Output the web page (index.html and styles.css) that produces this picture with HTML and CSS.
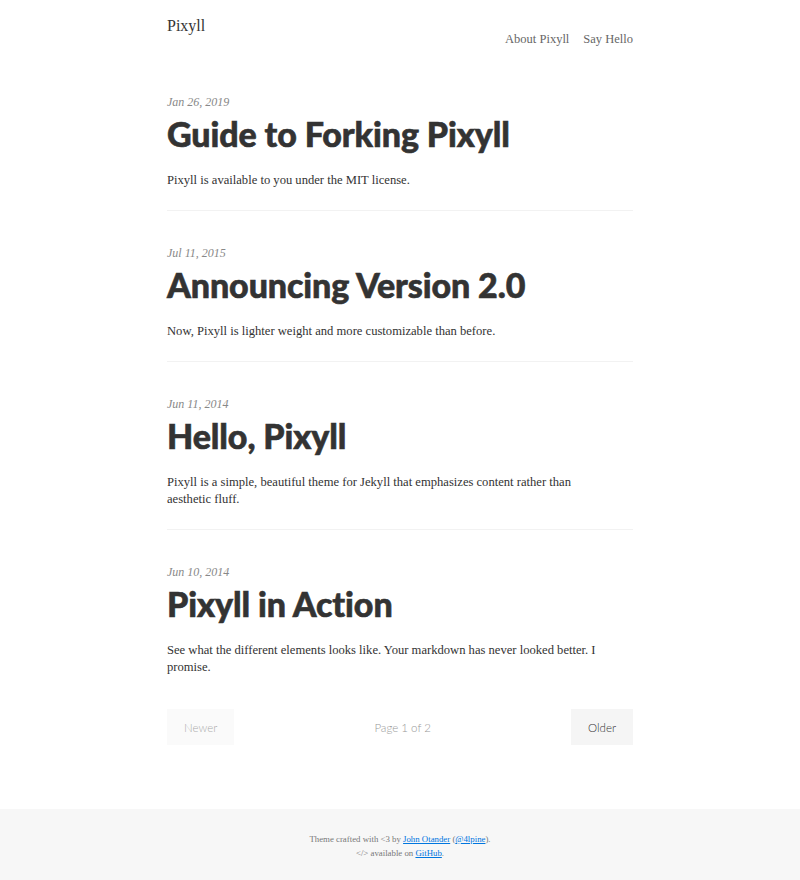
FILE: index.html
```html
<!DOCTYPE html>
<html>
<head>
<meta charset="utf-8">
<link rel="stylesheet" href="styles.css">
</head>
<body>
<header class="site-header">
  <div class="container header-row">
    <a class="site-title" href="#">Pixyll</a>
    <nav class="site-nav">
      <a href="#">About Pixyll</a>
      <a href="#">Say Hello</a>
    </nav>
  </div>
</header>
<main class="container posts">
  <article class="post">
    <div class="post-date">Jan 26, 2019</div>
    <h1 class="post-title">Guide to Forking Pixyll</h1>
    <p class="post-excerpt">Pixyll is available to you under the MIT license.</p>
  </article>
  <article class="post">
    <div class="post-date">Jul 11, 2015</div>
    <h1 class="post-title">Announcing Version 2.0</h1>
    <p class="post-excerpt">Now, Pixyll is lighter weight and more customizable than before.</p>
  </article>
  <article class="post">
    <div class="post-date">Jun 11, 2014</div>
    <h1 class="post-title">Hello, Pixyll</h1>
    <p class="post-excerpt">Pixyll is a simple, beautiful theme for Jekyll that emphasizes content rather than aesthetic fluff.</p>
  </article>
  <article class="post last">
    <div class="post-date">Jun 10, 2014</div>
    <h1 class="post-title">Pixyll in Action</h1>
    <p class="post-excerpt">See what the different elements looks like. Your markdown has never looked better. I promise.</p>
  </article>
  <div class="pagination">
    <span class="page-btn disabled">Newer</span>
    <span class="page-info">Page 1 of 2</span>
    <a class="page-btn" href="#">Older</a>
  </div>
</main>
<footer class="site-footer">
  <p>Theme crafted with &lt;3 by <a href="#">John Otander</a> (<a href="#">@4lpine</a>).</p>
  <p>&lt;/&gt; available on <a href="#">GitHub</a>.</p>
</footer>
</body>
</html>
```
FILE: styles.css
```css
html, body {
  margin: 0;
  padding: 0;
  background: #fff;
}
body {
  font-family: "Liberation Serif", "DejaVu Serif", serif;
  color: #333;
  font-size: 12.6px;
  line-height: 17px;
}
a {
  color: inherit;
  text-decoration: none;
}
.container {
  width: 466px;
  margin: 0 auto;
}
.site-header {
  padding-top: 16px;
  height: 94px;
  box-sizing: border-box;
}
.header-row {
  display: flex;
  justify-content: space-between;
  align-items: flex-start;
}
.site-title {
  font-size: 16px;
  line-height: 20px;
  color: #333;
}
.site-nav {
  display: flex;
  gap: 14px;
  margin-top: 13px;
  font-size: 12.5px;
  line-height: 20px;
}
.site-nav a {
  color: #666;
}
.post {
  border-bottom: 1px solid #f2f2f2;
  padding-bottom: 21px;
  margin-bottom: 34px;
}
.post.last {
  border-bottom: none;
  padding-bottom: 0;
  margin-bottom: 0;
}
.post-date {
  font-style: italic;
  color: #888;
  font-size: 12px;
  line-height: 17px;
}
.post-title {
  font-family: "Lato", "Liberation Sans", sans-serif;
  font-weight: 900;
  font-size: 34px;
  line-height: 40px;
  margin: 3px 0 0;
  color: #333;
  letter-spacing: -0.1px;
  -webkit-text-stroke: 0.6px #333;
}
.post-excerpt {
  margin: 18px 0 0;
  max-width: 445px;
}
.pagination {
  margin-top: 33px;
  display: flex;
  justify-content: space-between;
  align-items: center;
  font-family: "Lato", "Liberation Sans", sans-serif;
  font-size: 11.5px;
  font-weight: 300;
}
.page-btn {
  display: flex;
  align-items: center;
  height: 36px;
  padding: 0 17px;
  background: #f5f5f5;
  color: #333;
}
.page-btn.disabled {
  background: #fafafa;
  color: #aaa;
}
.page-info {
  color: #999;
}
.site-footer {
  margin-top: 64px;
  background: #f7f7f7;
  padding: 23px 0 20px;
  text-align: center;
  font-size: 8.8px;
  line-height: 14px;
  color: #777;
}
.site-footer p {
  margin: 0;
}
.site-footer a {
  color: #0076df;
  text-decoration: underline;
}
```
